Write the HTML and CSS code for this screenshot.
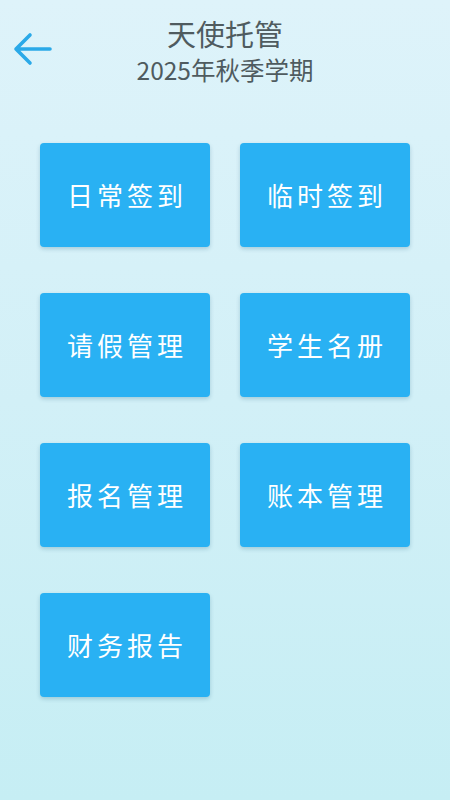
FILE: index.html
```html
<!DOCTYPE html>
<html lang="zh">
<head>
<meta charset="utf-8">
<link rel="stylesheet" href="styles.css">
</head>
<body>
<div class="page">
  <header class="header">
    <svg class="back" width="40" height="36" viewBox="0 0 40 36">
      <path d="M38 18 H4 M18 4 L4 18 L18 32" fill="none" stroke="#2aa9e8" stroke-width="3.6" stroke-linecap="round" stroke-linejoin="round"/>
    </svg>
    <div class="title">天使托管</div>
    <div class="subtitle">2025年秋季学期</div>
  </header>
  <main class="grid">
    <div class="btn">日常签到</div>
    <div class="btn">临时签到</div>
    <div class="btn">请假管理</div>
    <div class="btn">学生名册</div>
    <div class="btn">报名管理</div>
    <div class="btn">账本管理</div>
    <div class="btn">财务报告</div>
  </main>
</div>
</body>
</html>
```
FILE: styles.css
```css
html, body {
  margin: 0;
  padding: 0;
}
body {
  width: 450px;
  height: 800px;
  overflow: hidden;
  font-family: "Noto Sans CJK SC", "Noto Sans", sans-serif;
  background: linear-gradient(180deg, #def3fa 0%, #d2f0f7 50%, #c6eef4 100%);
}
.page {
  height: 800px;
}
.header {
  position: relative;
  height: 100px;
  text-align: center;
  padding-top: 13px;
  box-sizing: border-box;
}
.back {
  position: absolute;
  left: 12px;
  top: 31px;
}
.title {
  font-size: 29px;
  line-height: 40px;
  color: #4f5b5f;
}
.subtitle {
  font-size: 24.5px;
  line-height: 34px;
  color: #4f5b5f;
}
.grid {
  display: grid;
  grid-template-columns: 170px 170px;
  column-gap: 30px;
  row-gap: 46px;
  padding: 43px 0 0 40px;
}
.btn {
  height: 104px;
  background: #29b1f3;
  border-radius: 4px;
  box-shadow: 0 2px 4px rgba(0, 80, 120, 0.22);
  color: #ffffff;
  font-size: 26px;
  font-weight: 400;
  letter-spacing: 4px;
  display: flex;
  align-items: center;
  justify-content: center;
  padding-left: 4px;
  padding-bottom: 2px;
  box-sizing: border-box;
}
```
